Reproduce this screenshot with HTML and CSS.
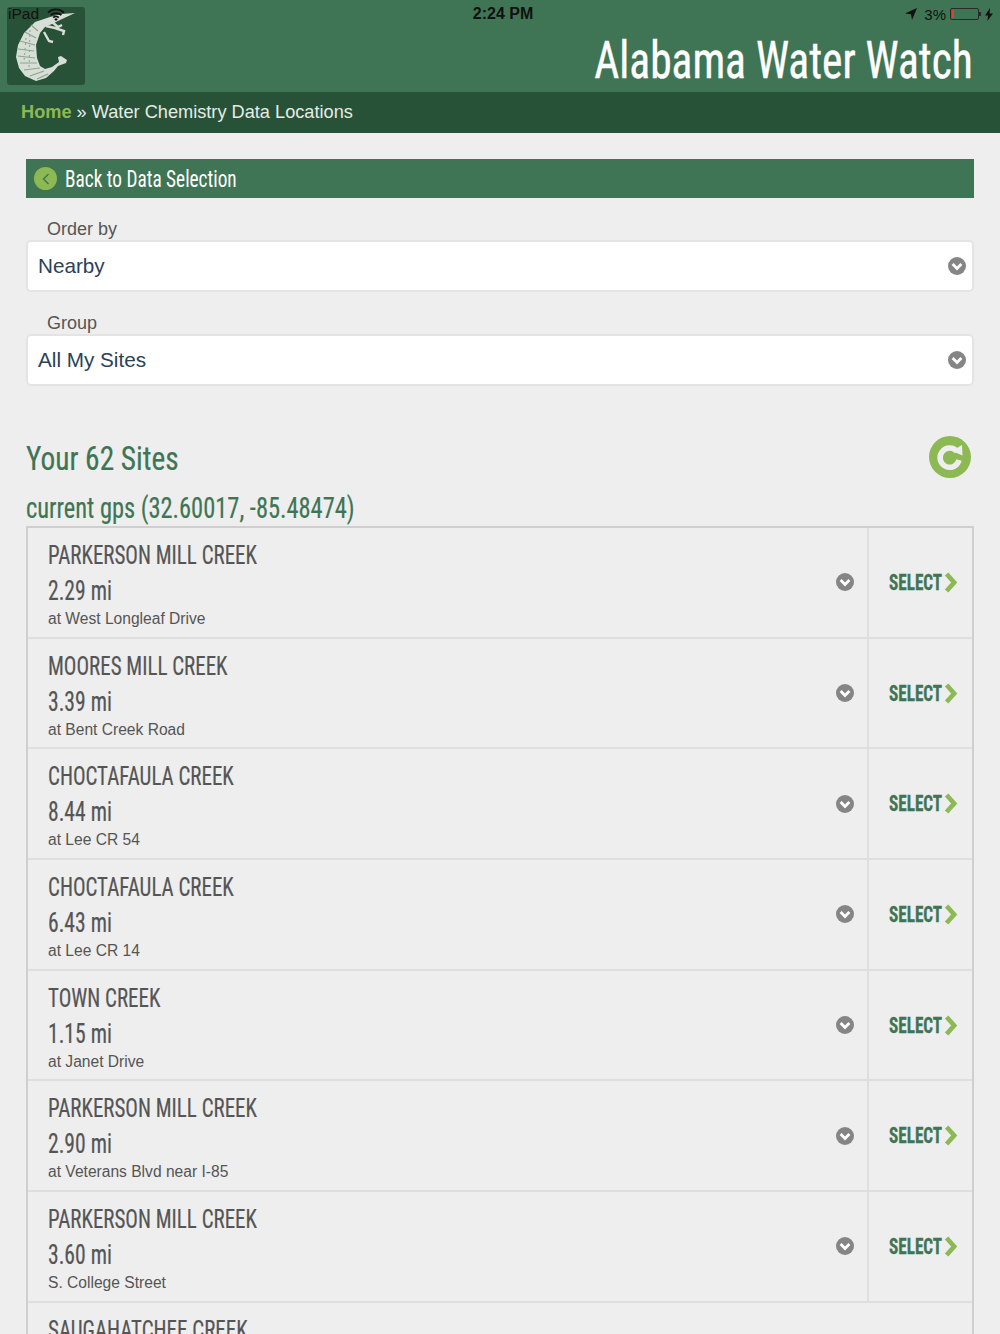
FILE: index.html
```html
<!DOCTYPE html>
<html lang="en">
<head>
  <meta charset="UTF-8">
  <meta name="viewport" content="width=device-width, initial-scale=1.0">
  <title>Alabama Water Watch</title>
  <link rel="stylesheet" href="styles.css">
</head>
<body>
<svg class="icon-defs" width="0" height="0">
  <symbol id="chev-down" viewBox="0 0 18 18">
    <circle cx="9" cy="9" r="9" fill="#858585"/>
    <path d="M4.6 7 9 11.4 13.4 7" fill="none" stroke="#fff" stroke-width="2.8"/>
  </symbol>
  <symbol id="chev-right" viewBox="0 0 14 21">
    <path d="M2.6 2 10.2 10.5 2.6 19" fill="none" stroke="#8cb954" stroke-width="4.6"/>
  </symbol>
</svg>

<header class="top">
  <div class="status">
    <span class="status-left">iPad
      <svg width="18" height="13" viewBox="0 0 18 13"><path d="M1 4.6a11.5 11.5 0 0 1 16 0M3.6 7.2a7.8 7.8 0 0 1 10.8 0M6.2 9.7a4 4 0 0 1 5.6 0" fill="none" stroke="#111" stroke-width="1.8"/><path d="M9 13 7.2 11.2a2.6 2.6 0 0 1 3.6 0z" fill="#111"/></svg>
    </span>
    <span class="status-time">2:24 PM</span>
    <span class="status-right">
      <svg class="status-arrow" width="12" height="12" viewBox="0 0 12 12"><path d="M12 0 0 5.4 6 6.2 7 12z" fill="#111"/></svg>
      <span>3%</span>
      <span class="battery"><span class="battery-level"></span></span>
      <svg width="8" height="13" viewBox="0 0 8 13"><path d="M5 0 0 7.4h3L2.4 13 8 5.4H4.6z" fill="#111"/></svg>
    </span>
  </div>
  <div class="brand">
    <div class="logo">
      <svg width="78" height="78" viewBox="7 7 78 78">
        <path d="M75 13 62 14 50 17 35 22 24 33 18 45 16 57 19 68 25 76 36 81 46 78 54 71 58 66 66 63 67 60 61 56 58 57 59 62 52 67 45 69 40 66 37 58 36 45 40 33 45 27 52 24 60 20Z" fill="#d6ded6"/>
        <path d="M46 26 55 28 64 31 63 35M44 32 49 41 53 42M52 22 58 27 62 25" fill="none" stroke="#d6ded6" stroke-width="2.4"/>
        <path d="M31 25 38 31M25 32 36 38M20 41 35 45M18 49 34 51M18 56 35 58M20 63 37 63M24 70 40 68M30 76 44 71M37 79 48 74" fill="none" stroke="#8aa590" stroke-width="1.2"/>
        <path d="M26 38 24 62M30 30 29 70" fill="none" stroke="#8aa590" stroke-width="1" stroke-dasharray="2 3"/>
      </svg>
    </div>
    <h1 class="site-title">Alabama Water Watch</h1>
  </div>
  <nav class="crumbs"><a href="#">Home</a> » Water Chemistry Data Locations</nav>
</header>

<main class="content">
  <a class="back-bar" href="#">
    <span class="back-icon"><svg width="12" height="14" viewBox="0 0 12 14"><path d="M8.5 2 3.5 7 8.5 12" fill="none" stroke="#3f7554" stroke-width="1.4"/></svg></span>
    <span class="back-text">Back to Data Selection</span>
  </a>

  <div class="field">
    <label class="field-label">Order by</label>
    <div class="select-box">Nearby <svg class="chev-icon"><use href="#chev-down"/></svg></div>
  </div>
  <div class="field">
    <label class="field-label">Group</label>
    <div class="select-box">All My Sites <svg class="chev-icon"><use href="#chev-down"/></svg></div>
  </div>

  <div class="sites-head">
    <h2 class="sites-title">Your 62 Sites</h2>
    <span class="refresh">
      <svg width="42" height="42" viewBox="0 0 42 42"><circle cx="21" cy="21" r="21" fill="#8cb954"/><path d="M28 15.5A9.6 9.6 0 1 0 30 24" fill="none" stroke="#eee" stroke-width="5.5"/><path d="M23 15 33 9 33.5 19.5z" fill="#eee"/></svg>
    </span>
  </div>
  <div class="gps">current gps (32.60017, -85.48474)</div>

  <div class="site-list">
    <div class="site-row">
      <div class="site-info"><div class="site-name">PARKERSON MILL CREEK</div><div class="site-dist">2.29 mi</div><div class="site-loc">at West Longleaf Drive</div></div>
      <div class="site-more"><svg class="chev-icon"><use href="#chev-down"/></svg></div>
      <a class="site-select" href="#"><span class="select-text">SELECT</span><svg class="select-chev"><use href="#chev-right"/></svg></a>
    </div>
    <div class="site-row">
      <div class="site-info"><div class="site-name">MOORES MILL CREEK</div><div class="site-dist">3.39 mi</div><div class="site-loc">at Bent Creek Road</div></div>
      <div class="site-more"><svg class="chev-icon"><use href="#chev-down"/></svg></div>
      <a class="site-select" href="#"><span class="select-text">SELECT</span><svg class="select-chev"><use href="#chev-right"/></svg></a>
    </div>
    <div class="site-row">
      <div class="site-info"><div class="site-name">CHOCTAFAULA CREEK</div><div class="site-dist">8.44 mi</div><div class="site-loc">at Lee CR 54</div></div>
      <div class="site-more"><svg class="chev-icon"><use href="#chev-down"/></svg></div>
      <a class="site-select" href="#"><span class="select-text">SELECT</span><svg class="select-chev"><use href="#chev-right"/></svg></a>
    </div>
    <div class="site-row">
      <div class="site-info"><div class="site-name">CHOCTAFAULA CREEK</div><div class="site-dist">6.43 mi</div><div class="site-loc">at Lee CR 14</div></div>
      <div class="site-more"><svg class="chev-icon"><use href="#chev-down"/></svg></div>
      <a class="site-select" href="#"><span class="select-text">SELECT</span><svg class="select-chev"><use href="#chev-right"/></svg></a>
    </div>
    <div class="site-row">
      <div class="site-info"><div class="site-name">TOWN CREEK</div><div class="site-dist">1.15 mi</div><div class="site-loc">at Janet Drive</div></div>
      <div class="site-more"><svg class="chev-icon"><use href="#chev-down"/></svg></div>
      <a class="site-select" href="#"><span class="select-text">SELECT</span><svg class="select-chev"><use href="#chev-right"/></svg></a>
    </div>
    <div class="site-row">
      <div class="site-info"><div class="site-name">PARKERSON MILL CREEK</div><div class="site-dist">2.90 mi</div><div class="site-loc">at Veterans Blvd near I-85</div></div>
      <div class="site-more"><svg class="chev-icon"><use href="#chev-down"/></svg></div>
      <a class="site-select" href="#"><span class="select-text">SELECT</span><svg class="select-chev"><use href="#chev-right"/></svg></a>
    </div>
    <div class="site-row">
      <div class="site-info"><div class="site-name">PARKERSON MILL CREEK</div><div class="site-dist">3.60 mi</div><div class="site-loc">S. College Street</div></div>
      <div class="site-more"><svg class="chev-icon"><use href="#chev-down"/></svg></div>
      <a class="site-select" href="#"><span class="select-text">SELECT</span><svg class="select-chev"><use href="#chev-right"/></svg></a>
    </div>
    <div class="site-row">
      <div class="site-info"><div class="site-name">SAUGAHATCHEE CREEK</div></div>
    </div>
  </div>
</main>
</body>
</html>
```
FILE: styles.css
```css
:root {
  --green: #3f7554;
  --green-dark: #285237;
  --green-light: #8cb954;
  --line: #cfcfcf;
  --line-soft: #dedede;
  --text: #555555;
  --narrow: "Liberation Sans Narrow", "Roboto Condensed", "DejaVu Sans Condensed", sans-serif;
}

* {
  box-sizing: border-box;
  margin: 0;
  padding: 0;
}

html, body {
  height: 1334px;
  overflow: hidden;
}

body {
  background-color: #eeeeee;
  color: var(--text);
  font-family: "Liberation Sans", Arial, sans-serif;
}

a {
  text-decoration: none;
}

.icon-defs {
  position: absolute;
}

.top {
  position: relative;
  background-color: var(--green);
}

.status {
  position: absolute;
  top: 5px;
  left: 8px;
  right: 7px;
  display: grid;
  grid-template-columns: 1fr auto 1fr;
  align-items: center;
  font-size: 15.5px;
  color: #111;
  z-index: 2;
}

.status-left {
  display: flex;
  align-items: center;
  gap: 8px;
}

.status-time {
  font-weight: 700;
  font-size: 16px;
  margin-left: 5px;
}

.status-right {
  display: flex;
  justify-content: flex-end;
  align-items: center;
  gap: 4px;
  font-size: 15px;
}

.status-arrow {
  margin-right: 3px;
}

.battery {
  position: relative;
  width: 29px;
  height: 12px;
  border: 1px solid #2a2a2a;
  border-radius: 2px;
  padding: 1px;
  margin-right: 2px;
}

.battery::after {
  content: "";
  position: absolute;
  right: -3px;
  top: 3px;
  width: 2px;
  height: 4px;
  background-color: #2a2a2a;
}

.battery-level {
  display: block;
  width: 2px;
  height: 100%;
  background-color: #e0402c;
}

.brand {
  height: 92px;
  padding: 7px 27px 0 7px;
  display: flex;
  justify-content: space-between;
}

.logo {
  width: 78px;
  height: 78px;
  background-color: var(--green-dark);
  border-radius: 3px;
}

.site-title {
  font-family: var(--narrow);
  font-weight: 400;
  font-size: 52px;
  line-height: 60px;
  margin-top: 24px;
  color: #fff;
  white-space: nowrap;
  transform: scaleX(.836);
  transform-origin: right center;
  -webkit-text-stroke: .4px #fff;
}

.crumbs {
  height: 41px;
  line-height: 41px;
  padding-left: 21px;
  background-color: var(--green-dark);
  font-size: 18.2px;
  color: #e6ebe6;
}

.crumbs a {
  color: var(--green-light);
  font-weight: 700;
}

.content {
  padding: 26px 26px 0;
}

.back-bar {
  display: flex;
  align-items: center;
  gap: 8px;
  height: 39px;
  padding-left: 8px;
  background-color: var(--green);
  color: #fff;
  font-family: var(--narrow);
  font-size: 23px;
}

.back-text {
  transform: scaleX(.839);
  transform-origin: left center;
  white-space: nowrap;
  padding-top: 2px;
}

.back-icon {
  width: 23px;
  height: 23px;
  border-radius: 50%;
  background-color: var(--green-light);
  display: flex;
  justify-content: center;
  align-items: center;
}

.field {
  margin-top: 20px;
}

.field-label {
  display: block;
  height: 22px;
  font-size: 18px;
  line-height: 22px;
  padding-left: 21px;
  color: #555;
}

.select-box {
  position: relative;
  height: 52px;
  line-height: 47px;
  padding-left: 10px;
  background-color: #fff;
  border: 2px solid #e4e4e4;
  border-radius: 5px;
  font-size: 20.7px;
  color: #2a4158;
}

.chev-icon {
  width: 18px;
  height: 18px;
  display: block;
}

.select-box .chev-icon {
  position: absolute;
  right: 6px;
  top: 15px;
}

.sites-head {
  margin-top: 49px;
  height: 46px;
  display: flex;
  justify-content: space-between;
  align-items: center;
}

.sites-title {
  font-family: var(--narrow);
  font-weight: 400;
  font-size: 34px;
  color: var(--green);
  transform: scaleX(.864);
  transform-origin: left center;
  white-space: nowrap;
  -webkit-text-stroke: .2px var(--green);
}

.refresh {
  margin: 2px 3px 0 0;
}

.gps {
  font-family: var(--narrow);
  font-size: 29px;
  line-height: 36px;
  margin-top: 9px;
  color: var(--green);
  height: 36px;
  transform: scaleX(.843);
  transform-origin: left center;
  white-space: nowrap;
  -webkit-text-stroke: .2px var(--green);
}

.site-list {
  border: 2px solid var(--line);
  border-bottom: 0;
}

.site-row {
  display: flex;
  height: 110.7px;
  border-bottom: 2px solid var(--line-soft);
}

.site-info {
  flex: 1;
  padding: 10px 0 0 20px;
}

.site-name {
  font-family: var(--narrow);
  font-size: 26px;
  line-height: 34px;
  transform: scaleX(.807);
  transform-origin: left center;
  white-space: nowrap;
  -webkit-text-stroke: .2px var(--text);
}

.site-dist {
  font-family: var(--narrow);
  font-size: 27px;
  line-height: 36px;
  margin-top: 1px;
  transform: scaleX(.8);
  transform-origin: left center;
  -webkit-text-stroke: .2px var(--text);
}

.site-loc {
  font-size: 15.6px;
  line-height: 22px;
  margin-top: -1px;
}

.site-more {
  width: 18px;
  margin-right: 13px;
  display: flex;
  align-items: center;
}

.site-select {
  width: 105px;
  border-left: 2px solid var(--line-soft);
  display: flex;
  align-items: center;
  padding-left: 20px;
  font-family: var(--narrow);
  font-weight: 700;
  font-size: 22px;
  color: var(--green);
}

.select-text {
  width: 55px;
  transform: scaleX(.78);
  transform-origin: left center;
  white-space: nowrap;
  -webkit-text-stroke: .3px var(--green);
}

.select-chev {
  flex: none;
  width: 14px;
  height: 21px;
}
```
